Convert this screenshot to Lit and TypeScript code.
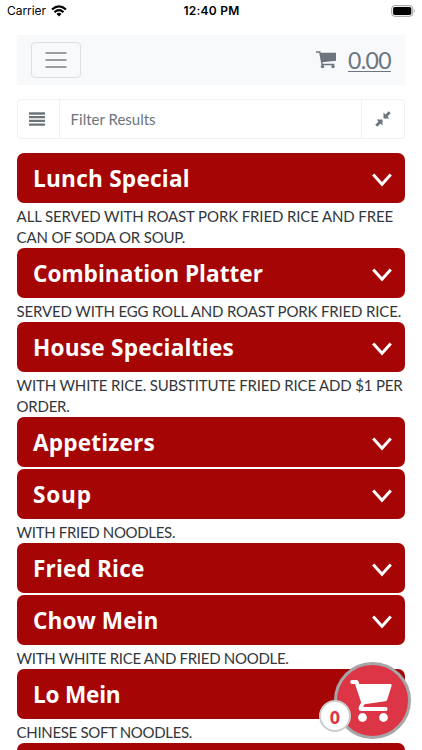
import { LitElement, html, css, svg } from "lit";
import { customElement, property } from "lit/decorators.js";

interface Section {
  title: string;
  width: number;
  notes?: { text: string; width: number }[];
}

const SECTIONS: Section[] = [
  { title: "Lunch Special", width: 157, notes: [
    { text: "ALL SERVED WITH ROAST PORK FRIED RICE AND FREE", width: 376.5 },
    { text: "CAN OF SODA OR SOUP.", width: 168.5 } ] },
  { title: "Combination Platter", width: 230, notes: [
    { text: "SERVED WITH EGG ROLL AND ROAST PORK FRIED RICE.", width: 384.5 } ] },
  { title: "House Specialties", width: 201, notes: [
    { text: "WITH WHITE RICE. SUBSTITUTE FRIED RICE ADD $1 PER", width: 386 },
    { text: "ORDER.", width: 53 } ] },
  { title: "Appetizers", width: 122 },
  { title: "Soup", width: 59, notes: [{ text: "WITH FRIED NOODLES.", width: 158.5 }] },
  { title: "Fried Rice", width: 111.5 },
  { title: "Chow Mein", width: 125.5, notes: [{ text: "WITH WHITE RICE AND FRIED NOODLE.", width: 272 }] },
  { title: "Lo Mein", width: 87.5, notes: [{ text: "CHINESE SOFT NOODLES.", width: 175.5 }] },
  { title: "", width: 0 },
];

/* A single line of text whose tracking is adjusted to fill a given width. */
@customElement("fit-text")
export class FitText extends LitElement {
  static styles = css`
    :host { display: block; white-space: pre; }
    .line { display: inline-block; text-decoration: inherit; text-underline-offset: inherit; }
  `;
  @property() text = "";
  @property({ type: Number }) width = 0;
  render() {
    return html`<span class="line">${this.text}</span>`;
  }
  updated() {
    if (!this.text) return;
    const line = this.renderRoot.querySelector(".line") as HTMLElement;
    line.style.letterSpacing = "0px";
    const natural = line.getBoundingClientRect().width;
    line.style.letterSpacing = (this.width - natural) / this.text.length + "px";
  }
}

const chevron = svg`<path d="M1.2 1.6 L10 11.2 L18.8 1.6" fill="none" stroke="#fff" stroke-width="3"/>`;

@customElement("app-root")
export class AppRoot extends LitElement {
  static styles = css`
    :host {
      display: block; position: relative; height: 750px; overflow: hidden;
      background: #fff; color: #33373b; font-family: Lato, "Open Sans", sans-serif;
    }
    svg { display: block; flex: none; }
    .status {
      display: grid; grid-template-columns: 1fr auto 1fr; align-items: center;
      height: 22px; margin-bottom: 13px; padding: 0 6px 0 7px; color: #000;
      font: 12px/22px Inter, sans-serif;
    }
    .carrier { display: flex; align-items: center; gap: 5px; }
    .time { font-weight: 600; }
    .battery { justify-self: end; }
    .page { padding: 0 16.6px; }
    .nav {
      display: flex; align-items: center; justify-content: space-between;
      box-sizing: border-box; height: 50px; padding: 0 14.5px 0 14px;
      background: #f8f9fb;
    }
    .toggle {
      display: flex; align-items: center; justify-content: center;
      box-sizing: border-box; width: 50px; height: 36px;
      border: 1px solid #dedfe0; border-radius: 4px;
    }
    .total { display: flex; align-items: center; gap: 11px; color: #6c757d; }
    .amount {
      font-size: 23px; line-height: 30px; text-decoration: underline 1.3px;
      text-underline-offset: 2px;
    }
    .filter {
      display: flex; box-sizing: border-box; height: 40px; margin: 14px 0;
      border: 1px solid #eef0f1; border-radius: 4px; color: #6c757d;
    }
    .addon { display: flex; align-items: center; justify-content: center; width: 42px; }
    .addon.menu { box-sizing: border-box; width: 41px; padding-right: 2px; }
    .field {
      flex: 1; padding-left: 11px; border: solid #eef0f1; border-width: 0 1px;
      font-size: 15px; line-height: 39px;
    }
    .bar {
      display: flex; align-items: center; justify-content: space-between;
      box-sizing: border-box; height: 50.1px; margin-bottom: 2.3px;
      padding: 0 13px 0 16.4px; border-radius: 7px; background: #a50505; color: #fff;
    }
    .title { padding-top: 2px; font: 700 22.6px/50px "Open Sans", sans-serif; }
    .chev { margin-top: 4px; }
    .notes { position: relative; top: 0.7px; font-size: 15px; line-height: 21.3px; }
    .fab {
      position: absolute; left: 334px; top: 662px; box-sizing: border-box;
      width: 77px; height: 77px; border: 3px solid #a6a6a8; border-radius: 50%;
      background: #dc3545;
    }
    .count {
      position: absolute; left: 319px; top: 700px; box-sizing: border-box;
      width: 32px; height: 32px; border: 2px solid #ccc; border-radius: 50%;
      background: #fff; color: #dc3545; text-align: center;
      font: 700 18px/31px "Open Sans", sans-serif;
    }
  `;

  render() {
    return html`
      <div class="status">
        <div class="carrier">
          <fit-text text="Carrier" width="39"></fit-text>
          <svg width="16" height="12" viewBox="0 0 16 12">
            <g fill="none" stroke="#000" stroke-width="2.2">
              <path d="M1 4.5 Q8 -1.8 15 4.5"/><path d="M3.5 7.2 Q8 3.1 12.5 7.2"/>
            </g>
            <path d="M5.5 8.9 Q8 6.8 10.5 8.9 L8 11.4Z"/>
          </svg>
        </div>
        <fit-text class="time" text="12:40 PM" width="56"></fit-text>
        <svg class="battery" width="25" height="12" viewBox="0 0 25 12">
          <rect x=".7" y=".7" width="21" height="10.6" rx="3" fill="none" stroke="#999"/>
          <rect x="2.1" y="2.1" width="18.2" height="7.8" rx="1.7"/>
          <path d="M23.2 4.2 Q25 6 23.2 7.8Z" fill="#999"/>
        </svg>
      </div>
      <div class="page">
        <div class="nav">
          <div class="toggle">
            <svg width="22" height="18" viewBox="0 0 22 18">
              <path d="M.5 2H21.5M.5 9H21.5M.5 16H21.5" stroke="#7d7e7f" stroke-width="1.7"/>
            </svg>
          </div>
          <div class="total">
            <svg width="21" height="18" viewBox="0 0 21 18" fill="#6c757d">
              <path d="M0 .3H3.7Q4.6.3 4.8 1.7H20V9.7L6.4 11.3L6.7 12.8H18.4V14.2H5.2V12.5L3.2 1.8H0Z"/>
              <circle cx="6.5" cy="15.6" r="1.7"/><circle cx="17" cy="15.6" r="1.7"/>
            </svg>
            <fit-text class="amount" text="0.00" width="43"></fit-text>
          </div>
        </div>
        <div class="filter">
          <div class="addon menu">
            <svg width="16" height="14" viewBox="0 0 16 14">
              <path d="M0 1.5H16M0 5.2H16M0 8.9H16M0 12.6H16" stroke="#6c757d" stroke-width="2.3"/>
            </svg>
          </div>
          <div class="field"><fit-text text="Filter Results" width="85"></fit-text></div>
          <div class="addon">
            <svg width="16" height="16" viewBox="0 0 16 16" fill="#6c757d">
              <path d="M8.5 7.5V1.6L10.5 3.5L13.7.3L15.7 2.3L12.5 5.5L14.4 7.5Z"/>
              <path d="M7.5 8.5V14.4L5.5 12.5L2.3 15.7L.3 13.7L3.5 10.5L1.6 8.5Z"/>
            </svg>
          </div>
        </div>
        ${SECTIONS.map((s) => html`
          <div class="bar">
            <fit-text class="title" .text=${s.title} .width=${s.width}></fit-text>
            <svg class="chev" width="20" height="14" viewBox="0 0 20 14">${chevron}</svg>
          </div>
          ${s.notes ? html`<div class="notes">${s.notes.map((n) => html`
            <fit-text .text=${n.text} .width=${n.width}></fit-text>`)}</div>` : null}
        `)}
      </div>
      <div class="fab">
        <svg width="71" height="71" viewBox="337 665 71 71" fill="#fff">
          <path d="M352 680H356.5Q358 680 358.5 681.5L359.3 684H390.5Q392.2 684 391.6 685.8L387.3 699.5Q386.8 701 385.2 701.2L364.5 704.2L363.2 707H386Q387.5 707 387.5 709T386 711H361.5Q358.4 711 358.7 708Q358.9 706 361.2 702.4L355 684H352Q350.3 684 350.3 682T352 680Z"/>
          <circle cx="362.5" cy="717.5" r="4.4"/><circle cx="383.5" cy="717.5" r="4.4"/>
        </svg>
      </div>
      <div class="count">0</div>
    `;
  }
}
